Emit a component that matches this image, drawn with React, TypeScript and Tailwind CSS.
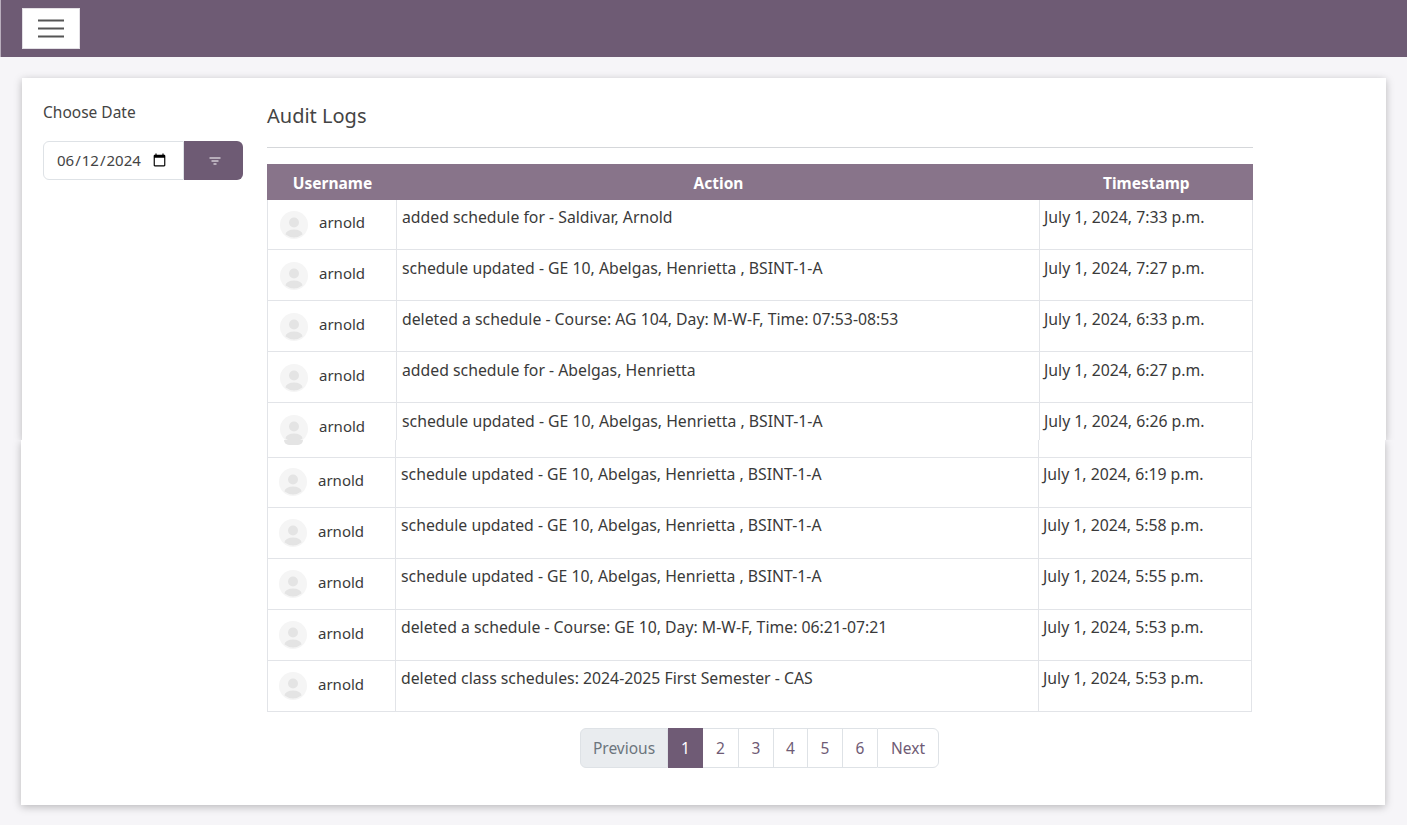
import React from 'react';

const font = "font-['Noto_Sans','Open_Sans',sans-serif]";

const topRows = [
  ['added schedule for - Saldivar, Arnold', 'July 1, 2024, 7:33 p.m.'],
  ['schedule updated - GE 10, Abelgas, Henrietta , BSINT-1-A', 'July 1, 2024, 7:27 p.m.'],
  ['deleted a schedule - Course: AG 104, Day: M-W-F, Time: 07:53-08:53', 'July 1, 2024, 6:33 p.m.'],
  ['added schedule for - Abelgas, Henrietta', 'July 1, 2024, 6:27 p.m.'],
  ['schedule updated - GE 10, Abelgas, Henrietta , BSINT-1-A', 'July 1, 2024, 6:26 p.m.'],
];

const bottomRows = [
  ['schedule updated - GE 10, Abelgas, Henrietta , BSINT-1-A', 'July 1, 2024, 6:19 p.m.'],
  ['schedule updated - GE 10, Abelgas, Henrietta , BSINT-1-A', 'July 1, 2024, 5:58 p.m.'],
  ['schedule updated - GE 10, Abelgas, Henrietta , BSINT-1-A', 'July 1, 2024, 5:55 p.m.'],
  ['deleted a schedule - Course: GE 10, Day: M-W-F, Time: 06:21-07:21', 'July 1, 2024, 5:53 p.m.'],
  ['deleted class schedules: 2024-2025 First Semester - CAS', 'July 1, 2024, 5:53 p.m.'],
];

function Avatar() {
  return (
    <svg width="28" height="28" viewBox="0 0 28 28" className="shrink-0">
      <circle cx="14" cy="14" r="14" fill="#f5f5f5" />
      <circle cx="14" cy="11.5" r="5" fill="#e4e4e4" />
      <path d="M5.5 23.5a8.5 5 0 0 1 17 0 14 14 0 0 1-17 0z" fill="#e4e4e4" />
    </svg>
  );
}

function Row({ action, time, lower = false }: { action: string; time: string; lower?: boolean }) {
  const grid = lower ? 'grid-cols-[129px_642px_214px]' : 'grid-cols-[130px_642px_214px]';
  return (
    <div className={`grid ${grid} h-[51px] border-b border-[#e2e4e8] text-[15.8px] leading-[22px] text-[#3a3a3a]`}>
      <div className={`flex items-start gap-[11px] border-x border-[#e2e4e8] ${lower ? 'pl-[11px] pt-[11px]' : 'pl-[12px] pt-[12px]'}`}>
        <Avatar />
        <span className={`text-[15px] ${lower ? 'pt-px' : ''}`}>arnold</span>
      </div>
      <div className={`pl-[5px] ${lower ? 'pt-[6px]' : 'pt-[7px]'}`}>{action}</div>
      <div className={`border-x border-[#e2e4e8] pl-[4px] ${lower ? 'pt-[6px]' : 'pt-[7px]'}`}>{time}</div>
    </div>
  );
}

function Pagination() {
  return (
    <div className="flex h-10 w-[359px] text-[15.5px] text-[#6f5b75]">
      <span className="flex w-[88px] items-center justify-center rounded-l-md border border-[#dee2e6] bg-[#e9ecef] pt-[2px] text-[#6c757d]">
        Previous
      </span>
      <span className="flex w-[35px] items-center justify-center bg-[#6f5b75] pt-[2px] text-white">1</span>
      <span className="flex w-[35px] items-center justify-center border-y border-[#dee2e6] pt-[2px]">2</span>
      <span className="flex w-[35px] items-center justify-center border-y border-l border-[#dee2e6] pt-[2px]">3</span>
      <span className="flex w-[34px] items-center justify-center border-y border-l border-[#dee2e6] pt-[2px]">4</span>
      <span className="flex w-[35px] items-center justify-center border-y border-l border-[#dee2e6] pt-[2px]">5</span>
      <span className="flex w-[35px] items-center justify-center border-y border-l border-[#dee2e6] pt-[2px]">6</span>
      <span className="flex w-[62px] items-center justify-center rounded-r-md border border-[#dee2e6] pt-[2px]">Next</span>
    </div>
  );
}

export default function App() {
  return (
    <div className={`${font} h-[825px] w-[1407px] overflow-hidden bg-[#f6f5f8]`}>
      <nav className="flex h-[57px] items-start border-l border-[#b9aebd] bg-[#6e5b74] pl-[21px] pt-2">
        <button className="flex h-[41px] w-[58px] items-center justify-center border border-[#e3e0e5] bg-white">
          <svg width="26" height="19" viewBox="0 0 26 19" fill="none" stroke="#555" strokeWidth="2">
            <path d="M0 1.5h26M0 9.5h26M0 17.5h26" />
          </svg>
        </button>
      </nav>

      {/* the reference is two captures stitched at y=440, the lower one sits 1px to the left */}
      <div className="mt-[21px]">
        <section className="ml-[22px] flex h-[362px] w-[1364px] overflow-hidden bg-white shadow-[0_2px_8px_rgba(0,0,0,0.25)] [clip-path:inset(-12px_-12px_0_-12px)]">
          <aside className="w-[245px] pl-[21px] pt-[23px]">
            <label className="block text-[15.5px] leading-[22px] text-[#444]">Choose Date</label>
            <div className="mt-[18px] flex h-[39px] w-[200px]">
              <input
                type="date"
                defaultValue="2024-06-12"
                className="w-[141px] rounded-l-md border border-[#dee2e6] pl-[12px] pr-[14px] text-[15px] text-[#444] outline-none"
              />
              <button className="flex w-[59px] items-center justify-center rounded-r-md bg-[#6e5b74] pl-[2px]">
                <svg width="12" height="8" viewBox="0 0 12 8" fill="none" stroke="#fff" strokeWidth="1.2">
                  <path d="M0.5 1h11M2.5 4h7M4.5 7h3" />
                </svg>
              </button>
            </div>
          </aside>

          <main className="w-[986px]">
            <h2 className="pt-[24px] text-[20px] leading-[28px] text-[#444]">Audit Logs</h2>
            <hr className="mt-[17px] border-[#d5d7da]" />
            <div className="relative z-10 mt-4 -mb-px grid h-[36px] grid-cols-[130px_642px_214px] items-center bg-[#88748a] pt-[3px] text-[15.5px] font-bold text-white">
              <span className="pl-[1px] text-center">Username</span>
              <span className="pl-[1px] text-center">Action</span>
              <span className="pl-[64px]">Timestamp</span>
            </div>
            {topRows.map((r, i) => (
              <Row key={i} action={r[0]} time={r[1]} />
            ))}
          </main>
        </section>

        <section className="ml-[21px] flex h-[365px] w-[1364px] flex-col items-start overflow-hidden bg-white pl-[246px] shadow-[0_2px_8px_rgba(0,0,0,0.25)] [clip-path:inset(0_-12px_-12px_-12px)]">
          <div className="grid h-[18px] grid-cols-[129px_642px_214px] border-b border-[#e2e4e8]">
            <div className="border-x border-[#e2e4e8] pl-[16px]">
              <div className="h-[5px] w-[19px] rounded-b-full bg-[#e4e4e4]" />
            </div>
            <div />
            <div className="border-x border-[#e2e4e8]" />
          </div>
          <div className="-mt-px">
            {bottomRows.map((r, i) => (
              <Row key={i} action={r[0]} time={r[1]} lower />
            ))}
          </div>
          <div className="ml-[313px] mt-[16px]">
            <Pagination />
          </div>
        </section>
      </div>
    </div>
  );
}
